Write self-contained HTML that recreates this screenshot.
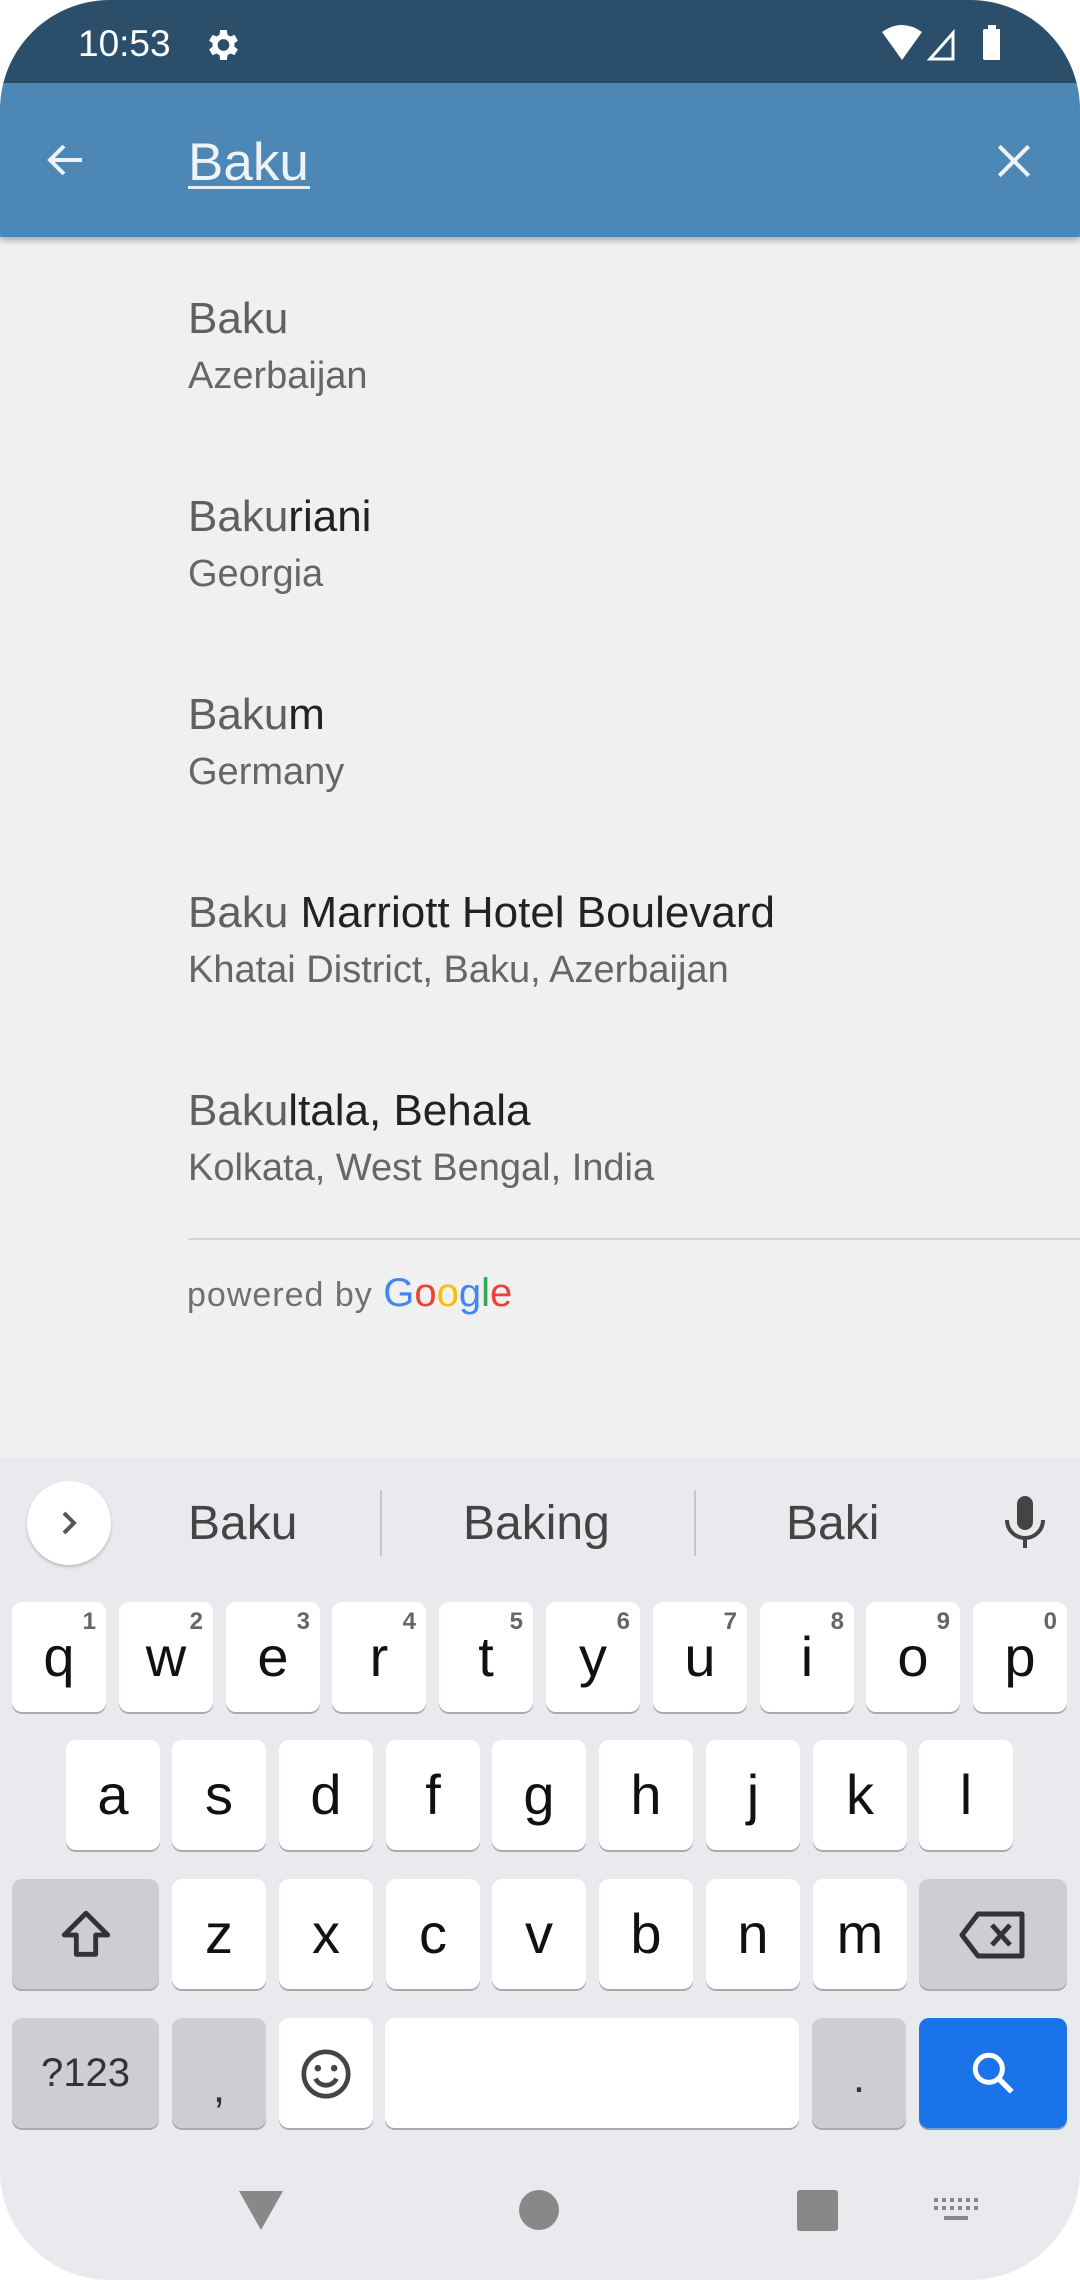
<!DOCTYPE html>
<html><head><meta charset="utf-8">
<style>
*{margin:0;padding:0;box-sizing:border-box}
html,body{width:1080px;height:2280px;background:#fff;overflow:hidden;font-family:"Liberation Sans",Roboto,sans-serif}
#scr{position:absolute;left:0;top:0;width:1080px;height:2280px;border-radius:110px;overflow:hidden;background:#f0f0f0}
.abs{position:absolute;white-space:nowrap}
#status{left:0;top:0;width:1080px;height:84px;background:#2b4f6b}
#bar{left:0;top:83px;width:1080px;height:154px;background:#4d87b5;box-shadow:0 3px 6px rgba(0,0,0,.3)}
.t{font-size:44px;line-height:44px;color:#222}
.t span{color:#606060}
.s{font-size:38px;line-height:38px;color:#666}
#kb{left:0;top:1458px;width:1080px;height:822px;background:#e8eaed}
.k{position:absolute;width:94px;height:110px;background:#fff;border-radius:10px;box-shadow:0 2px 0 #a9abb0;font-size:56px;color:#111;text-align:center;line-height:110px}
.k.g{background:#ccced4}
.k i{position:absolute;right:10px;top:8px;font-style:normal;font-size:24px;line-height:24px;color:#666;font-weight:bold}
.sg{position:absolute;font-size:48px;color:#444;top:1500px;line-height:48px}
</style></head><body>
<div id="scr">
<div class="abs" id="status"></div>
<div class="abs" style="left:78px;top:24px;font-size:37px;line-height:40px;color:#fff">10:53</div>
<svg class="abs" style="left:202px;top:25px" width="40" height="40" viewBox="0 0 24 24"><path fill="#fff" d="M19.4 13a7.5 7.5 0 0 0 0-2l2.1-1.6-2-3.5-2.5 1a7 7 0 0 0-1.7-1L14.9 3h-4l-.4 2.9a7 7 0 0 0-1.7 1l-2.5-1-2 3.5L6.4 11a7.5 7.5 0 0 0 0 2l-2.1 1.6 2 3.5 2.5-1a7 7 0 0 0 1.7 1l.4 2.9h4l.4-2.9a7 7 0 0 0 1.7-1l2.5 1 2-3.5zM12.9 15.5a3.5 3.5 0 1 1 0-7 3.5 3.5 0 0 1 0 7z"/></svg>
<svg class="abs" style="left:880px;top:24px" width="120" height="38" viewBox="0 0 120 38"><path fill="#fff" d="M2 8 Q22 -6 42 8 L22 36Z"/><path fill="none" stroke="#fff" stroke-width="3" d="M50 35 L73 9 L73 35Z"/><rect x="103" y="5" width="18" height="31" rx="2" fill="#fff"/><rect x="108" y="1" width="8" height="5" fill="#fff"/></svg>
<div class="abs" id="bar"></div>
<svg class="abs" style="left:42px;top:136px" width="48" height="48" viewBox="0 0 24 24"><path fill="none" stroke="#eef3f8" stroke-width="2" d="M20 12H5M11 5l-7 7 7 7"/></svg>
<div class="abs" style="left:188px;top:136px;font-size:53px;line-height:53px;color:#eef3f8">Baku</div>
<div class="abs" style="left:188px;top:186px;width:122px;height:3px;background:#e6eef6"></div>
<svg class="abs" style="left:992px;top:139px" width="44" height="44" viewBox="0 0 24 24"><path stroke="#eef3f8" stroke-width="2.2" d="M4 4L20 20M20 4L4 20"/></svg>

<div class="abs t" style="left:188px;top:297px"><span>Baku</span></div>
<div class="abs s" style="left:188px;top:357px">Azerbaijan</div>
<div class="abs t" style="left:188px;top:495px"><span>Baku</span>riani</div>
<div class="abs s" style="left:188px;top:555px">Georgia</div>
<div class="abs t" style="left:188px;top:693px"><span>Baku</span>m</div>
<div class="abs s" style="left:188px;top:753px">Germany</div>
<div class="abs t" style="left:188px;top:891px"><span>Baku</span> Marriott Hotel Boulevard</div>
<div class="abs s" style="left:188px;top:951px">Khatai District, Baku, Azerbaijan</div>
<div class="abs t" style="left:188px;top:1089px"><span>Baku</span>ltala, Behala</div>
<div class="abs s" style="left:188px;top:1149px">Kolkata, West Bengal, India</div>
<div class="abs" style="left:188px;top:1238px;width:892px;height:2px;background:#d4d4d4"></div>
<div class="abs" style="left:187px;top:1274px;font-size:34px;line-height:38px;color:#707070;letter-spacing:1px">powered by <span style="font-size:40px;letter-spacing:0"><span style="color:#4285f4">G</span><span style="color:#ea4335">o</span><span style="color:#fbbc05">o</span><span style="color:#4285f4">g</span><span style="color:#34a853">l</span><span style="color:#ea4335">e</span></span></div>

<div class="abs" id="kb"></div>
<div class="abs" style="left:27px;top:1481px;width:84px;height:84px;border-radius:50%;background:#fff;box-shadow:0 2px 3px rgba(0,0,0,.2)"></div>
<svg class="abs" style="left:55px;top:1509px" width="28" height="28" viewBox="0 0 28 28"><path fill="none" stroke="#555" stroke-width="4" d="M9 4l10 10-10 10"/></svg>
<div class="sg" style="left:188px">Baku</div>
<div class="abs" style="left:380px;top:1490px;width:2px;height:66px;background:#c4c6ca"></div>
<div class="sg" style="left:463px">Baking</div>
<div class="abs" style="left:694px;top:1490px;width:2px;height:66px;background:#c4c6ca"></div>
<div class="sg" style="left:786px">Baki</div>
<svg class="abs" style="left:1000px;top:1494px" width="48" height="56" viewBox="0 0 48 56"><rect x="17" y="2" width="16" height="34" rx="8" fill="#444"/><path fill="none" stroke="#444" stroke-width="4" d="M7 26a18 18 0 0 0 36 0M25 44v10"/></svg>

<div class="k" style="left:12px;top:1602px">q<i>1</i></div>
<div class="k" style="left:119px;top:1602px">w<i>2</i></div>
<div class="k" style="left:226px;top:1602px">e<i>3</i></div>
<div class="k" style="left:332px;top:1602px">r<i>4</i></div>
<div class="k" style="left:439px;top:1602px">t<i>5</i></div>
<div class="k" style="left:546px;top:1602px">y<i>6</i></div>
<div class="k" style="left:653px;top:1602px">u<i>7</i></div>
<div class="k" style="left:760px;top:1602px">i<i>8</i></div>
<div class="k" style="left:866px;top:1602px">o<i>9</i></div>
<div class="k" style="left:973px;top:1602px">p<i>0</i></div>

<div class="k" style="left:66px;top:1740px">a</div>
<div class="k" style="left:172px;top:1740px">s</div>
<div class="k" style="left:279px;top:1740px">d</div>
<div class="k" style="left:386px;top:1740px">f</div>
<div class="k" style="left:492px;top:1740px">g</div>
<div class="k" style="left:599px;top:1740px">h</div>
<div class="k" style="left:706px;top:1740px">j</div>
<div class="k" style="left:813px;top:1740px">k</div>
<div class="k" style="left:919px;top:1740px">l</div>

<div class="k g" style="left:12px;top:1879px;width:147px"><svg style="margin-top:27px" width="58" height="58" viewBox="0 0 24 24"><path fill="none" stroke="#333" stroke-width="2" stroke-linejoin="round" d="M12 3L3 12h5v8h8v-8h5z"/></svg></div>
<div class="k" style="left:172px;top:1879px">z</div>
<div class="k" style="left:279px;top:1879px">x</div>
<div class="k" style="left:386px;top:1879px">c</div>
<div class="k" style="left:492px;top:1879px">v</div>
<div class="k" style="left:599px;top:1879px">b</div>
<div class="k" style="left:706px;top:1879px">n</div>
<div class="k" style="left:813px;top:1879px">m</div>
<div class="k g" style="left:919px;top:1879px;width:148px"><svg style="margin-top:31px" width="70" height="50" viewBox="0 0 70 50"><path fill="none" stroke="#333" stroke-width="5" stroke-linejoin="round" d="M20 4h44v42H20L4 25z"/><path stroke="#333" stroke-width="5" d="M34 15l18 20M52 15L34 35"/></svg></div>

<div class="k g" style="left:12px;top:2018px;width:147px;font-size:40px;color:#333">?123</div>
<div class="k g" style="left:172px;top:2018px;font-size:44px;line-height:140px;color:#333">,</div>
<div class="k" style="left:279px;top:2018px"><svg style="margin-top:28px" width="56" height="56" viewBox="0 0 24 24"><circle cx="12" cy="12" r="9.5" fill="none" stroke="#444" stroke-width="2"/><circle cx="8.5" cy="9.5" r="1.4" fill="#444"/><circle cx="15.5" cy="9.5" r="1.4" fill="#444"/><path fill="none" stroke="#444" stroke-width="2" d="M7.5 14a5 5 0 0 0 9 0"/></svg></div>
<div class="k" style="left:385px;top:2018px;width:414px"></div>
<div class="k g" style="left:812px;top:2018px;font-size:44px;line-height:120px;color:#333">.</div>
<div class="k" style="left:919px;top:2018px;width:148px;background:#1a73e8;box-shadow:0 2px 0 #7a9cc8"><svg style="margin-top:30px" width="50" height="50" viewBox="0 0 24 24"><circle cx="10" cy="10" r="6.5" fill="none" stroke="#fff" stroke-width="2.4"/><path stroke="#fff" stroke-width="2.6" d="M14.5 14.5L21 21"/></svg></div>

<svg class="abs" style="left:238px;top:2190px" width="46" height="40" viewBox="0 0 46 40"><path fill="#888" d="M1 1h44L23 40z"/></svg>
<div class="abs" style="left:519px;top:2190px;width:40px;height:40px;border-radius:50%;background:#888"></div>
<div class="abs" style="left:797px;top:2190px;width:41px;height:41px;border-radius:3px;background:#888"></div>
<svg class="abs" style="left:934px;top:2198px" width="44" height="28" viewBox="0 0 44 28"><g fill="#888"><rect x="0" y="0" width="4" height="4"/><rect x="8" y="0" width="4" height="4"/><rect x="16" y="0" width="4" height="4"/><rect x="24" y="0" width="4" height="4"/><rect x="32" y="0" width="4" height="4"/><rect x="40" y="0" width="4" height="4"/><rect x="0" y="8" width="4" height="4"/><rect x="8" y="8" width="4" height="4"/><rect x="16" y="8" width="4" height="4"/><rect x="24" y="8" width="4" height="4"/><rect x="32" y="8" width="4" height="4"/><rect x="40" y="8" width="4" height="4"/><rect x="10" y="18" width="24" height="4"/></g></svg>
</div>
</body></html>
